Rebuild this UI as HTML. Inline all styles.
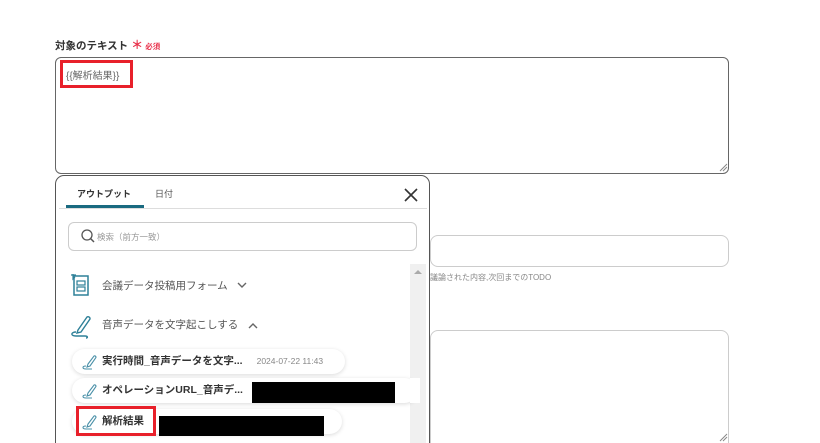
<!DOCTYPE html>
<html style="width:820px;height:443px;overflow:hidden"><head><meta charset="utf-8"><style>
*{box-sizing:border-box;margin:0;padding:0}
body{width:820px;height:443px;overflow:hidden;background:#fff;font-family:"Liberation Sans","Noto Sans CJK JP",sans-serif;color:#333;position:relative}
.a{position:absolute;white-space:nowrap}
.pill{position:absolute;height:25px;border-radius:13px;background:#fff;box-shadow:0 1px 4px rgba(0,0,0,.15);font-size:10.5px;font-weight:bold;color:#333;line-height:25px;padding-left:30px;white-space:nowrap;overflow:hidden}
.pill svg{position:absolute;left:10px;top:5px}
</style></head><body>
<div class="a" style="left:55px;top:36px;font-size:10.5px;font-weight:bold;color:#333">対象のテキスト <span style="color:#e8304a;font-size:12px">＊</span><span style="color:#e8304a;font-size:7.5px"> 必須</span></div>
<div class="a" style="left:55px;top:57px;width:674px;height:117px;border:1px solid #666;border-radius:6px"></div>
<svg class="a" style="left:718px;top:162px" width="10" height="10"><path d="M9 2L2 9M9 5L5 9" stroke="#888" stroke-width="1"/></svg>
<div class="a" style="left:66px;top:67px;font-size:10px;color:#666">{{解析結果}}</div>
<div class="a" style="left:60px;top:60px;width:73px;height:28px;border:3px solid #e8202a"></div>
<div class="a" style="left:430px;top:235px;width:299px;height:32px;border:1px solid #ccc;border-radius:8px"></div>
<div class="a" style="left:430px;top:272px;font-size:8px;color:#888">議論された内容,次回までのTODO</div>
<div class="a" style="left:430px;top:330px;width:299px;height:130px;border:1px solid #ccc;border-radius:8px"></div>
<svg class="a" style="left:718px;top:432px" width="10" height="10"><path d="M9 2L2 9M9 5L5 9" stroke="#888" stroke-width="1"/></svg>
<div class="a" style="left:55px;top:175px;width:375px;height:290px;border:1px solid #555;border-radius:9px;background:#fff">
<div class="a" style="left:21px;top:11px;font-size:9px;font-weight:bold;color:#333">アウトプット</div>
<div class="a" style="left:99px;top:11px;font-size:9px;color:#555">日付</div>
<div class="a" style="left:10px;top:29px;width:78px;height:3px;background:#1a6a80"></div>
<div class="a" style="left:3px;top:32px;width:368px;height:1px;background:#ddd"></div>
<svg class="a" style="left:348px;top:12px" width="14" height="14"><path d="M1 1L13 13M13 1L1 13" stroke="#333" stroke-width="1.6"/></svg>
<div class="a" style="left:12px;top:46px;width:349px;height:29px;border:1px solid #ccc;border-radius:6px"></div>
<svg class="a" style="left:25px;top:53px" width="14" height="15"><circle cx="6" cy="6" r="5" fill="none" stroke="#555" stroke-width="1.3"/><path d="M9.5 9.5L13 13" stroke="#555" stroke-width="1.5"/></svg>
<div class="a" style="left:41px;top:55px;font-size:8.5px;color:#999">検索（前方一致）</div>
<div class="a" style="left:354px;top:88px;width:16px;height:200px;background:#f0f0f0"></div>
<svg class="a" style="left:357px;top:93px" width="10" height="6"><path d="M1 5L5 1L9 5Z" fill="#aaa"/></svg>
<svg class="a" style="left:13px;top:97px" width="22" height="24"><path d="M4 1v5l2-2M2 2l5 0" stroke="#2e8098" stroke-width="1.2" fill="none"/><rect x="5" y="3" width="14" height="19" fill="none" stroke="#2e8098" stroke-width="1.5"/><rect x="8" y="8" width="8" height="4" fill="none" stroke="#2e8098" stroke-width="1.2"/><rect x="8" y="14" width="8" height="4" fill="none" stroke="#2e8098" stroke-width="1.2"/></svg>
<div class="a" style="left:46px;top:102px;font-size:10.5px;color:#555">会議データ投稿用フォーム</div>
<svg class="a" style="left:181px;top:106px" width="10" height="7"><path d="M1 1L5 5L9 1" stroke="#666" stroke-width="1.4" fill="none"/></svg>
<svg class="a" style="left:13px;top:137px" width="24" height="26"><path d="M9 17L18 4a2 2 0 0 1 3 2L12 19l-4 1z" fill="none" stroke="#2e8098" stroke-width="1.4"/><path d="M7 19c-5 0-6 4 0 4h9c3 0 3 2 1 2" fill="none" stroke="#2e8098" stroke-width="1.4"/></svg>
<div class="a" style="left:46px;top:141px;font-size:10.5px;color:#555">音声データを文字起こしする</div>
<svg class="a" style="left:192px;top:146px" width="10" height="7"><path d="M1 6L5 2L9 6" stroke="#666" stroke-width="1.4" fill="none"/></svg>
</div>
<div class="pill" style="left:72px;top:349px;width:273px">
<svg width="16" height="16"><path d="M6 10L12 2a1.4 1.4 0 0 1 2 1.4L8 12l-3 1z" fill="none" stroke="#4a90a8" stroke-width="1.1"/><path d="M4 12c-4 0-4 3 0 3h6" fill="none" stroke="#4a90a8" stroke-width="1.1"/></svg>
実行時間_音声データを文字...<span style="font-weight:normal;color:#888;font-size:8.5px;margin-left:14px">2024-07-22 11:43</span></div>
<div class="pill" style="left:72px;top:378px;width:345px">
<svg width="16" height="16"><path d="M6 10L12 2a1.4 1.4 0 0 1 2 1.4L8 12l-3 1z" fill="none" stroke="#4a90a8" stroke-width="1.1"/><path d="M4 12c-4 0-4 3 0 3h6" fill="none" stroke="#4a90a8" stroke-width="1.1"/></svg>
オペレーションURL_音声デ...</div>
<div class="pill" style="left:72px;top:409px;width:270px">
<svg width="16" height="16"><path d="M6 10L12 2a1.4 1.4 0 0 1 2 1.4L8 12l-3 1z" fill="none" stroke="#4a90a8" stroke-width="1.1"/><path d="M4 12c-4 0-4 3 0 3h6" fill="none" stroke="#4a90a8" stroke-width="1.1"/></svg>
解析結果</div>
<div class="a" style="left:410px;top:378px;width:10px;height:25px;background:#fff"></div>
<div class="a" style="left:252px;top:382px;width:143px;height:21px;background:#000"></div>
<div class="a" style="left:159px;top:416px;width:165px;height:20px;background:#000"></div>
<div class="a" style="left:76px;top:406px;width:80px;height:30px;border:3px solid #e8202a"></div>
</body></html>
